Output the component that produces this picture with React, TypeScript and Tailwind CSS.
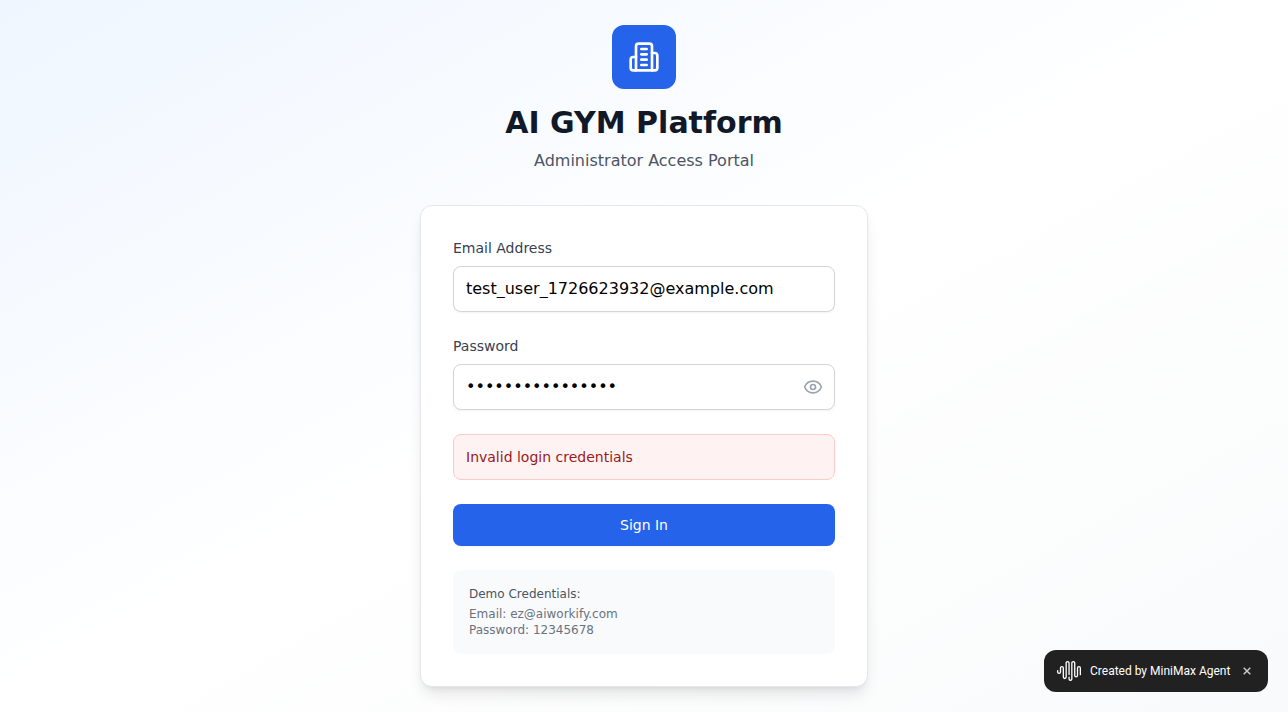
import { useState } from "react";
import { Eye } from "lucide-react";

function BuildingIcon() {
  return (
    <svg
      className="h-8 w-8 text-white"
      viewBox="0 0 24 24"
      fill="none"
      stroke="currentColor"
      strokeWidth="2"
      strokeLinecap="round"
      strokeLinejoin="round"
    >
      <path d="M6 22V4a2 2 0 0 1 2-2h8a2 2 0 0 1 2 2v18Z" />
      <path d="M6 12H4a2 2 0 0 0-2 2v6a2 2 0 0 0 2 2h2" />
      <path d="M18 9h2a2 2 0 0 1 2 2v9a2 2 0 0 1-2 2h-2" />
      <path d="M10 6h4" />
      <path d="M10 10h4" />
      <path d="M10 14h4" />
      <path d="M10 18h4" />
    </svg>
  );
}

function WaveLogo() {
  return (
    <svg className="h-6 w-6 shrink-0" viewBox="0 0 24 24" fill="currentColor">
      <path d="M16.278 2c1.156 0 2.093.927 2.093 2.07v12.501a.74.74 0 00.744.709.74.74 0 00.743-.709V9.099a2.06 2.06 0 012.071-2.049A2.06 2.06 0 0124 9.1v6.561a.649.649 0 01-.652.645.649.649 0 01-.653-.645V9.1a.762.762 0 00-.766-.758.762.762 0 00-.766.758v7.472a2.037 2.037 0 01-2.048 2.026 2.037 2.037 0 01-2.048-2.026v-12.5a.785.785 0 00-.788-.753.785.785 0 00-.789.752l-.001 15.904A2.037 2.037 0 0113.441 22a2.037 2.037 0 01-2.048-2.026V18.04c0-.356.292-.645.652-.645.36 0 .652.289.652.645v1.934c0 .263.142.506.372.638.23.131.514.131.744 0a.734.734 0 00.372-.638V4.07c0-1.143.937-2.07 2.093-2.07zm-5.674 0c1.156 0 2.093.927 2.093 2.07v11.523a.648.648 0 01-.652.645.648.648 0 01-.652-.645V4.07a.785.785 0 00-.789-.78.785.785 0 00-.789.78v14.013a2.06 2.06 0 01-2.07 2.048 2.06 2.06 0 01-2.071-2.048V9.1a.762.762 0 00-.766-.758.762.762 0 00-.766.758v3.8a2.06 2.06 0 01-2.071 2.049A2.06 2.06 0 010 12.9v-1.378c0-.357.292-.646.653-.646.36 0 .653.29.653.646V12.9c0 .418.343.757.766.757s.766-.339.766-.757V9.099a2.06 2.06 0 012.07-2.048 2.06 2.06 0 012.071 2.048v8.984c0 .419.343.758.767.758.423 0 .766-.339.766-.758V4.07c0-1.143.937-2.07 2.093-2.07z" />
    </svg>
  );
}

const fieldClass =
  "block h-[46px] w-full rounded-lg border border-[#d1d5db] bg-white px-3 pb-0.5 text-base text-black shadow-xs outline-none";

export default function App() {
  const [email, setEmail] = useState("test_user_1726623932@example.com");
  const [password, setPassword] = useState("1234567890abcdef");
  const [visible, setVisible] = useState(false);
  const [badge, setBadge] = useState(true);

  return (
    <div className="flex min-h-screen items-center justify-center bg-[linear-gradient(to_bottom_right,#eff6ff,#ffffff,#f9fafb)] font-['DejaVu_Sans',sans-serif]">
      <main className="w-full max-w-md">
        <header className="mb-8 flex flex-col items-center text-center">
          <div className="mb-4 flex h-16 w-16 items-center justify-center rounded-xl bg-[#2563eb]">
            <BuildingIcon />
          </div>
          <h1 className="mb-2 text-3xl font-bold text-[#111827]">AI GYM Platform</h1>
          <p className="text-[#4b5563]">Administrator Access Portal</p>
        </header>

        <section className="rounded-xl border border-[#e5e7eb] bg-white p-8 shadow-lg">
          <form className="flex flex-col gap-6" onSubmit={(e) => e.preventDefault()}>
            <div>
              <label htmlFor="email" className="mb-2 block text-sm text-[#374151]">
                Email Address
              </label>
              <input
                id="email"
                type="email"
                value={email}
                onChange={(e) => setEmail(e.target.value)}
                className={fieldClass}
              />
            </div>
            <div>
              <label htmlFor="password" className="mb-2 block text-sm text-[#374151]">
                Password
              </label>
              <div className="relative">
                <input
                  id="password"
                  type={visible ? "text" : "password"}
                  value={password}
                  onChange={(e) => setPassword(e.target.value)}
                  className={fieldClass}
                />
                <button
                  type="button"
                  onClick={() => setVisible(!visible)}
                  className="absolute inset-y-0 right-0 flex items-center pr-3 text-[#9ca3af]"
                >
                  <Eye className="h-5 w-5" />
                </button>
              </div>
            </div>
            <div className="rounded-lg border border-[#fecaca] bg-[#fef2f2] p-3 text-sm text-[#991b1b]">
              Invalid login credentials
            </div>
            <button
              type="submit"
              className="h-[42px] w-full rounded-lg bg-[#2563eb] text-sm text-white shadow-xs"
            >
              Sign In
            </button>
          </form>

          <div className="mt-6 rounded-lg bg-[#f9fafb] p-4 text-xs text-[#6b7280]">
            <p className="mb-1 text-[#4b5563]">Demo Credentials:</p>
            <p>Email: ez@aiworkify.com</p>
            <p>Password: 12345678</p>
          </div>
        </section>
      </main>

      {badge && (
        <aside className="fixed right-5 bottom-5 flex h-[42px] w-56 items-center rounded-xl bg-[#212121] pl-[13px] font-['Roboto',sans-serif] text-xs text-white">
          <WaveLogo />
          <span className="ml-[9px] w-[140px] whitespace-nowrap">Created by MiniMax Agent</span>
          <button
            type="button"
            onClick={() => setBadge(false)}
            className="ml-[9px] flex h-4 w-4 items-center justify-center text-[#c8c8c8]"
          >
            <svg className="h-2 w-2" viewBox="0 0 8 8" fill="none" stroke="currentColor" strokeWidth="1.5">
              <path d="M0.7 0.7l6.6 6.6M7.3 0.7l-6.6 6.6" />
            </svg>
          </button>
        </aside>
      )}
    </div>
  );
}
